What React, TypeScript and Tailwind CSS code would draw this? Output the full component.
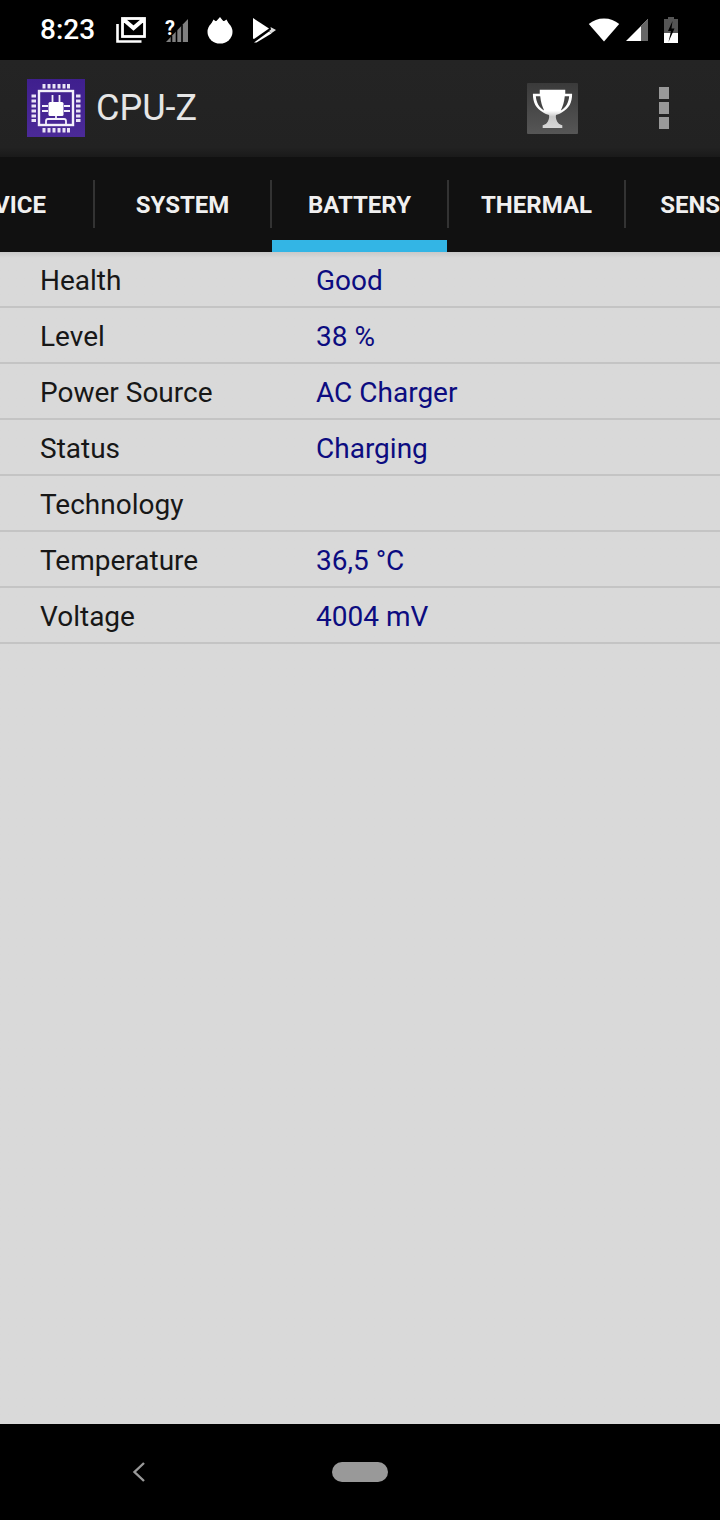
import React from 'react';

const tabs = ['DEVICE', 'SYSTEM', 'BATTERY', 'THERMAL', 'SENSORS'];

const rows: Array<{ label: string; value: string }> = [
  { label: 'Health', value: 'Good' },
  { label: 'Level', value: '38 %' },
  { label: 'Power Source', value: 'AC Charger' },
  { label: 'Status', value: 'Charging' },
  { label: 'Technology', value: '' },
  { label: 'Temperature', value: '36,5 °C' },
  { label: 'Voltage', value: '4004 mV' },
];

const GmailIcon = () => (
  <svg width="30" height="26" viewBox="0 0 30 26" className="block">
    <path d="M1.500 7v17.500h24" fill="none" stroke="#fff" strokeWidth="2.600" />
    <rect x="6.500" y="1.500" width="22" height="18" fill="none" stroke="#fff" strokeWidth="2.800" />
    <path d="M7 2l10.500 9L28 2" fill="none" stroke="#fff" strokeWidth="4" />
    <path d="M6 2h5v4H6zM24 2h5v4h-5z" fill="#fff" />
  </svg>
);

const NoSimSignalIcon = () => (
  <div className="relative h-[26px] w-[24px]">
    <svg width="24" height="26" viewBox="0 0 24 26" className="block">
      <path d="M1 25 23 2v23z" fill="#808080" />
      <path d="M6.500 25v-6M11.500 25V13M17 25V8" stroke="#000" strokeWidth="1.600" />
    </svg>
    <span className="absolute left-0 top-[1px] text-[20px] font-bold leading-none text-white [font-family:Roboto,sans-serif]">?</span>
  </div>
);

const FlameIcon = () => (
  <svg width="26" height="27" viewBox="0 0 26 27" className="block">
    <ellipse cx="13" cy="15" rx="12.500" ry="11.500" fill="#fff" />
    <path d="M3 9 6.500 2.500 9 4.500 13 0l3.500 4.500 3-2L23 9z" fill="#fff" />
  </svg>
);

const PlayIcon = () => (
  <svg width="24" height="26" viewBox="0 0 24 26" className="block">
    <path d="M1 1 17 11.500 2 22 1 21.500z" fill="#fff" />
    <path d="M2 25.500 17 14.500l2.500 2L4.500 25.500z" fill="#fff" />
    <path d="M18.500 10 24 13l-5 3.500-2-2.500 2-1.500z" fill="#ddd" />
  </svg>
);

const WifiIcon = () => (
  <svg width="32" height="26" viewBox="0 0 32 26" className="block">
    <path d="M16 24.500.8 7C5 3.500 10 1.500 16 1.500S27 3.500 31.200 7z" fill="#fff" />
  </svg>
);

const CellIcon = () => (
  <svg width="22" height="22" viewBox="0 0 22 22" className="block">
    <path d="M0 22 22 0v22z" fill="#fff" />
    <path d="M15 7l7-7v22h-7z" fill="#666" />
  </svg>
);

const BatteryIcon = () => (
  <svg width="14" height="26" viewBox="0 0 14 26" className="block">
    <path d="M4 0h6v2h4v24H0V2h4z" fill="#555" />
    <path d="M0 16h14v10H0z" fill="#fff" />
    <path d="M8.500 4 4 14h3l-2.500 11 6-13.500H7.500z" fill="#000" />
  </svg>
);

const CpuLogo = () => (
  <svg width="60" height="60" viewBox="0 0 60 60" className="block">
    <defs>
      <linearGradient id="logo-bg" x1="0" y1="0" x2="0" y2="1">
        <stop offset="0" stopColor="#3f1f8e" />
        <stop offset="1" stopColor="#4b2a98" />
      </linearGradient>
    </defs>
    <rect x="1" y="1" width="58" height="58" fill="url(#logo-bg)" />
    <path
      d="M16.500 6h3v4.500h-3zM21.500 6h3v4.500h-3zM26.500 6h3v4.500h-3zM31.500 6h3v4.500h-3zM36.500 6h3v4.500h-3zM41 6h3v4.500h-3zM16.500 50h3v4.500h-3zM21.500 50h3v4.500h-3zM26.500 50h3v4.500h-3zM31.500 50h3v4.500h-3zM36.500 50h3v4.500h-3zM41 50h3v4.500h-3zM5.500 16.500H10v3H5.500zM5.500 21.500H10v3H5.500zM5.500 26.500H10v3H5.500zM5.500 31.500H10v3H5.500zM5.500 36.500H10v3H5.500zM5.500 41H10v3H5.500zM50 16.500h4.500v3H50zM50 21.500h4.500v3H50zM50 26.500h4.500v3H50zM50 31.500h4.500v3H50zM50 36.500h4.500v3H50zM50 41h4.500v3H50z"
      fill="#e9e4f5"
    />
    <rect x="13" y="13" width="34" height="34" fill="none" stroke="#f3f0fa" strokeWidth="2.400" />
    <rect x="22.500" y="24" width="15" height="14" rx="1.500" fill="#fff" />
    <path
      d="M26.500 24v-7M33.500 24v-7M22 28h-6M22 33h-6M38 28h6M38 33h6M30 38v3M20 46v-3q0-2 2-2h16q2 0 2 2v3"
      fill="none"
      stroke="#f3f0fa"
      strokeWidth="1.800"
    />
  </svg>
);

const TrophyIcon = () => (
  <svg width="51" height="51" viewBox="0 0 52 52" className="block">
    <defs>
      <linearGradient id="trophy-bg" x1="0" y1="0" x2="0" y2="1">
        <stop offset="0" stopColor="#3a3a3a" />
        <stop offset="1" stopColor="#565656" />
      </linearGradient>
      <linearGradient id="trophy-fg" x1="0" y1="0" x2="0" y2="1">
        <stop offset="0.55" stopColor="#fff" />
        <stop offset="0.7" stopColor="#c8c8c8" />
        <stop offset="1" stopColor="#d8d8d8" />
      </linearGradient>
    </defs>
    <rect x="0" y="0" width="52" height="52" rx="1" fill="url(#trophy-bg)" />
    <path
      d="M13 7h26v4h7c0 9-3 15-10.500 19-1.500 1-4 2-6 2.500-.5 3 .5 6 2.500 8.500 1 1 3 2 4 2v3H16v-3c1 0 3-1 4-2 2-2.500 3-5.500 2.500-8.500-2-.5-4.500-1.500-6-2.500C9 26 6 20 6 11h7z"
      fill="url(#trophy-fg)"
    />
    <path d="M9 13.500c.5 6 3 11.500 8.500 14.500-2-4-3.500-9-4-14.500zM43 13.500c-.5 6-3 11.500-8.500 14.500 2-4 3.500-9 4-14.500z" fill="#444" />
  </svg>
);

const StatusBar = () => (
  <div className="flex h-[60px] shrink-0 items-center bg-black pl-[40px] text-white">
    <span className="w-[76px] text-[28px] font-medium leading-none [font-family:Roboto,sans-serif]">8:23</span>
    <div className="flex items-center">
      <GmailIcon />
      <div className="ml-[19px]"><NoSimSignalIcon /></div>
      <div className="ml-[18px]"><FlameIcon /></div>
      <div className="ml-[19px]"><PlayIcon /></div>
    </div>
    <div className="ml-auto flex items-center pr-[42px]">
      <WifiIcon />
      <div className="ml-[6px]"><CellIcon /></div>
      <div className="ml-[16px]"><BatteryIcon /></div>
    </div>
  </div>
);

const Toolbar = () => (
  <div className="flex h-[97px] shrink-0 items-center bg-linear-to-b from-[#242424] via-[#222222] via-90% to-[#1a1a1a] pl-[26px] pb-[1px]">
    <CpuLogo />
    <span className="ml-[10px] text-[36px] leading-none text-[#e6e6e6] [font-family:Roboto,sans-serif]">CPU-Z</span>
    <div className="ml-auto flex items-center pr-[51px]">
      <TrophyIcon />
      <div className="ml-[81px] flex w-[10px] flex-col gap-[3px]">
        <div className="h-[12px] bg-[#999999]" />
        <div className="h-[12px] bg-[#999999]" />
        <div className="h-[12px] bg-[#999999]" />
      </div>
    </div>
  </div>
);

const TabStrip = () => (
  <div className="flex h-[95px] shrink-0 overflow-hidden bg-[#111111]">
    <div className="ml-[-82px] flex shrink-0">
      {tabs.map((tab) => (
        <div key={tab} className="relative flex h-full w-[177px] shrink-0 items-center justify-center pr-[2px]">
          <span className="text-[24px] font-bold leading-none whitespace-nowrap text-[#f0f0f0] [font-family:Roboto,sans-serif]">{tab}</span>
          <div className="absolute right-0 top-[23px] h-[48px] w-[2px] bg-[#333333]" />
          {tab === 'BATTERY' && <div className="absolute bottom-0 left-0 right-[2px] h-[12px] bg-[#33b5e5]" />}
        </div>
      ))}
    </div>
  </div>
);

const InfoRow = ({ label, value }: { label: string; value: string }) => (
  <div className="flex h-[56px] items-center border-b-2 border-[#c4c4c4] pl-[40px] pt-[4px] text-[28px] leading-none [font-family:Roboto,sans-serif]">
    <span className="w-[276px] text-[#171717]">{label}</span>
    <span className="text-[#0c0c80]">{value}</span>
  </div>
);

export default function App() {
  return (
    <div className="flex h-[1520px] w-[720px] flex-col overflow-hidden bg-[#d9d9d9]">
      <StatusBar />
      <Toolbar />
      <TabStrip />
      <div className="flex-1 bg-[#d9d9d9] bg-linear-to-b from-[#c9c9c9] from-0% to-[#d9d9d9] to-[6px] bg-no-repeat">
        {rows.map((row) => (
          <InfoRow key={row.label} label={row.label} value={row.value} />
        ))}
      </div>
      <div className="flex h-[96px] shrink-0 items-center bg-black pl-[132px]">
        <svg width="14" height="20" viewBox="0 0 14 20" className="block">
          <path d="M12 1 2.500 10l9.500 9" fill="none" stroke="#999" strokeWidth="2.400" />
        </svg>
        <div className="ml-[186px] h-[20px] w-[56px] rounded-full bg-[#999999]" />
      </div>
    </div>
  );
}
